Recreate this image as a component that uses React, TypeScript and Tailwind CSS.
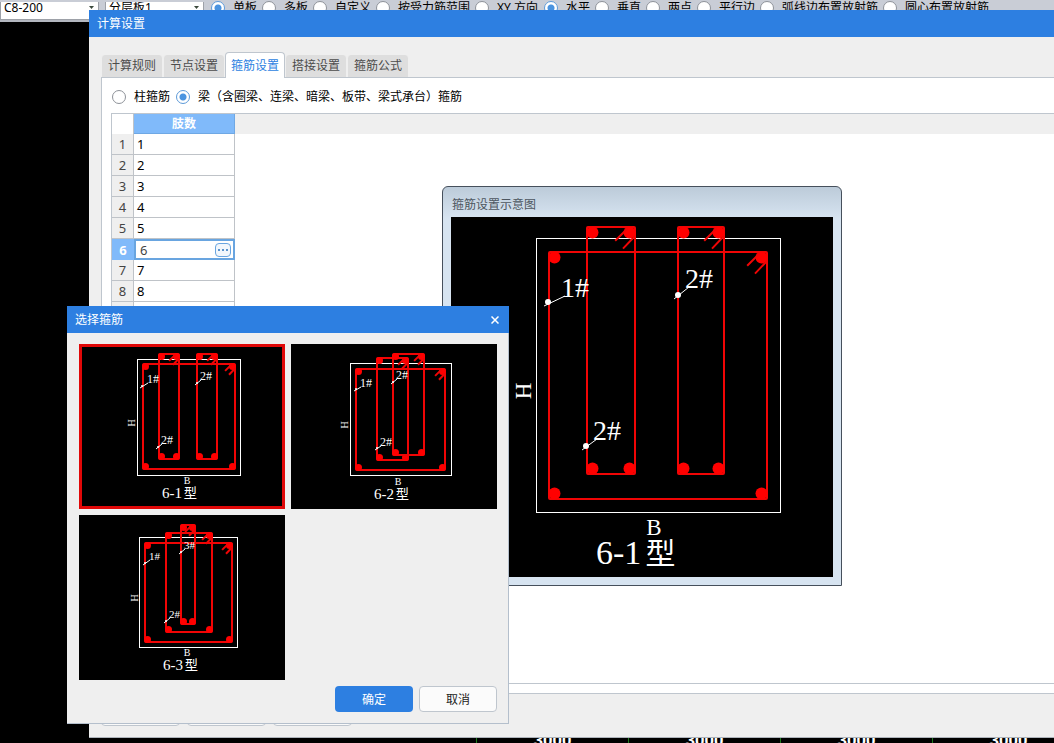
import React from "react";

type Box = [number, number, number, number];
type Mark = { text: string; x: number; y: number; dot: [number, number] };

interface Drawing {
  title: string;
  width: number;
  height: number;
  frame: Box;
  bars: Box[];
  marks: Mark[];
  h: [number, number];
  b: [number, number];
  caption: [number, number];
  corner: number;
  dot: number;
  markSize: number;
  letterSize: number;
  captionSize: number;
}

const small = {
  width: 206,
  height: 165,
  corner: 3,
  dot: 1,
  markSize: 12,
  letterSize: 10,
  captionSize: 15,
};

const typeOne: Drawing = {
  ...small,
  title: "6-1型",
  frame: [58, 15, 161, 131],
  bars: [
    [64, 20, 156, 125],
    [80, 10, 100, 115],
    [118, 10, 138, 115],
  ],
  marks: [
    { text: "1#", x: 68, y: 39, dot: [63, 42] },
    { text: "2#", x: 121, y: 36, dot: [118, 39] },
    { text: "2#", x: 82, y: 100, dot: [79, 103] },
  ],
  h: [53, 79],
  b: [108, 137],
  caption: [83, 154],
};

const typeTwo: Drawing = {
  ...small,
  title: "6-2型",
  frame: [59, 19, 160, 131],
  bars: [
    [65, 25, 154, 126],
    [86, 14, 117, 116],
    [102, 10, 133, 111],
  ],
  marks: [
    { text: "1#", x: 69, y: 43, dot: [65, 45] },
    { text: "2#", x: 105, y: 35, dot: [102, 38] },
    { text: "2#", x: 89, y: 102, dot: [86, 104] },
  ],
  h: [54, 81],
  b: [107, 138],
  caption: [83, 155],
};

const typeThree: Drawing = {
  ...small,
  title: "6-3型",
  markSize: 11,
  frame: [60, 22, 158, 132],
  bars: [
    [66, 28, 153, 127],
    [87, 18, 133, 117],
    [102, 10, 116, 109],
  ],
  marks: [
    { text: "1#", x: 70, y: 45, dot: [66, 48] },
    { text: "3#", x: 105, y: 34, dot: [102, 37] },
    { text: "2#", x: 90, y: 103, dot: [87, 106] },
  ],
  h: [56, 83],
  b: [108, 138],
  caption: [84, 155],
};

const largeOne: Drawing = {
  title: "6-1型",
  width: 382,
  height: 360,
  frame: [85, 21, 329, 295],
  bars: [
    [98, 35, 316, 282],
    [136, 10, 184, 257],
    [227, 10, 273, 257],
  ],
  marks: [
    { text: "1#", x: 110, y: 80, dot: [97, 85] },
    { text: "2#", x: 234, y: 71, dot: [227, 78] },
    { text: "2#", x: 142, y: 223, dot: [135, 229] },
  ],
  h: [72, 174],
  b: [203, 310],
  caption: [145, 347],
  corner: 6,
  dot: 3,
  markSize: 28,
  letterSize: 23,
  captionSize: 34,
};

const serif = '"Liberation Serif", "Noto Sans CJK SC", serif';

function StirrupDrawing({ d }: { d: Drawing }) {
  const c = d.corner;
  const r = c > 4 ? c : c + 0.5;
  const [fx, fy, fx2, fy2] = d.frame;
  return (
    <svg
      viewBox={`0 0 ${d.width} ${d.height}`}
      className="block h-full w-full bg-black"
      role="img"
      aria-label={d.title}
    >
      <rect x={fx + 0.5} y={fy + 0.5} width={fx2 - fx} height={fy2 - fy} fill="none" stroke="#fff" />
      {d.bars.map(([x, y, x2, y2], i) => (
        <g key={i} stroke="#f00505" fill="#ff0000">
          <rect x={x} y={y} width={x2 - x} height={y2 - y} rx={1} fill="none" strokeWidth={2} />
          <g stroke="none">
            <circle cx={x + c - 0.5} cy={y + c - 0.5} r={r} />
            <circle cx={x2 - c + 0.5} cy={y + c - 0.5} r={r} />
            <circle cx={x + c - 0.5} cy={y2 - c + 0.5} r={r} />
            <circle cx={x2 - c + 0.5} cy={y2 - c + 0.5} r={r} />
          </g>
          <path
            strokeWidth={2}
            d={`M${x2 - 3.3 * c} ${y + 2.3 * c}L${x2 - 1.2 * c} ${y + 0.2 * c}M${x2 - 2 * c} ${
              y + 3.6 * c
            }L${x2} ${y + 1.5 * c}`}
          />
        </g>
      ))}
      {d.marks.map((m, i) => {
        const [cx, cy] = m.dot;
        const k = d.dot;
        return (
          <g key={i} fill="#fff">
            <circle cx={cx} cy={cy} r={k} />
            <path
              stroke="#fff"
              d={`M${cx - k - 1} ${cy + k + 1}L${m.x + (k > 1 ? 4 : 1)} ${m.y - (k > 1 ? 1 : 0)}`}
            />
            <text x={m.x} y={m.y} fontFamily={serif} fontSize={d.markSize}>
              {m.text}
            </text>
          </g>
        );
      })}
      <g fill="#fff" fontFamily={serif} fontSize={d.letterSize} textAnchor="middle">
        <text transform={`translate(${d.h[0]} ${d.h[1]}) rotate(-90)`} dy="0.33em">
          H
        </text>
        <text x={d.b[0]} y={d.b[1]} dy="0.33em">
          B
        </text>
      </g>
      <text x={d.caption[0]} y={d.caption[1]} fill="#fff" fontFamily={serif} fontSize={d.captionSize}>
        {d.title.slice(0, 3)}
        <tspan dx="0.14em" fontSize="0.88em">
          {d.title.slice(3)}
        </tspan>
      </text>
    </svg>
  );
}

function Radio({ name, label, checked }: { name: string; label: string; checked?: boolean }) {
  return (
    <label className="flex shrink-0 items-center gap-2 whitespace-nowrap">
      <input
        type="radio"
        name={name}
        defaultChecked={checked}
        className="h-3.5 w-3.5 shrink-0 appearance-none rounded-full border border-[#8e9299] bg-white checked:border-[#5d9ad8] checked:bg-[radial-gradient(circle,#4b94e0_0_3px,#ffffff_4px)]"
      />
      {label}
    </label>
  );
}

function Picker({ label, value }: { label: string; value: string }) {
  return (
    <div className="relative h-[18px] w-[99px] shrink-0">
      <select
        aria-label={label}
        className="h-full w-full appearance-none border border-t-0 border-[#9da1a8] bg-white pb-1 pl-[3px] text-xs leading-3"
      >
        <option>{value}</option>
      </select>
      <svg viewBox="0 0 5 3" className="pointer-events-none absolute right-[5px] top-1.5 h-[3px] w-[5px]">
        <path d="M0 0h5L2.5 3z" fill="#3c4a3c" />
      </svg>
    </div>
  );
}

const placements = ["单板", "多板", "自定义", "按受力筋范围", "XY 方向"];
const directions = ["水平", "垂直", "两点", "平行边", "弧线边布置放射筋", "圆心布置放射筋"];
const tabs = ["计算规则", "节点设置", "箍筋设置", "搭接设置", "箍筋公式"];
const legs = [1, 2, 3, 4, 5, 6, 7, 8];

function LegTable() {
  return (
    <table className="w-[123px] table-fixed border-separate border-spacing-0 text-[13px] leading-5">
      <colgroup>
        <col className="w-[22px]" />
        <col />
      </colgroup>
      <thead>
        <tr>
          <th className="h-5 border-r border-[#bfc3c8] bg-white p-0" />
          <th className="h-5 border-b border-r border-[#6fa8e4] bg-[#80bafa] p-0 text-xs leading-[18px] text-white">肢数</th>
        </tr>
      </thead>
      <tbody>
        {legs.map((n) =>
          n === 6 ? (
            <tr key={n}>
              <th className="h-[21px] bg-[#80bafa] p-0 font-bold text-white">{n}</th>
              <td className="h-[21px] p-0">
                <div className="flex h-[21px] items-center border-2 border-[#69a5e0] bg-white pl-1 pr-0.5 text-[#444]">
                  <input aria-label="肢数" defaultValue="6" className="w-0 min-w-0 grow outline-none" />
                  <button
                    aria-label="选择箍筋"
                    className="flex h-[14px] w-4 items-center justify-center gap-0.5 rounded-sm border border-[#69a5e0] bg-[#f2f7fc]"
                  >
                    <span className="h-0.5 w-0.5 bg-[#5b93cc]" />
                    <span className="h-0.5 w-0.5 bg-[#5b93cc]" />
                    <span className="h-0.5 w-0.5 bg-[#5b93cc]" />
                  </button>
                </div>
              </td>
            </tr>
          ) : (
            <tr key={n}>
              <th className="h-[21px] border-b border-r border-[#bfc3c8] bg-[#efefef] p-0 font-normal text-[#444]">{n}</th>
              <td className="h-[21px] border-b border-r border-[#bfc3c8] bg-white p-0 pl-[3px]">{n}</td>
            </tr>
          )
        )}
        <tr>
          <th className="h-[21px] border-b border-r border-[#bfc3c8] bg-[#efefef] p-0" />
          <td className="h-[21px] border-b border-r border-[#bfc3c8] bg-white p-0" />
        </tr>
      </tbody>
    </table>
  );
}

function SettingsDialog() {
  return (
    <section className="absolute bottom-[5px] left-[89px] right-0 top-2.5 flex flex-col border-b border-[#aeb4bb] bg-[#efefef]">
      <h1 className="h-[27px] shrink-0 bg-[#2d7fe1] pl-2 leading-[27px] text-white">计算设置</h1>
      <div role="tablist" className="z-10 ml-3 mt-[15px] flex h-[26px] shrink-0 items-end">
        {tabs.map((t) =>
          t === "箍筋设置" ? (
            <button
              key={t}
              role="tab"
              aria-selected
              className="h-[26px] rounded-t border border-b-0 border-[#bfc6ce] bg-white px-[5px] text-[#2d7fe1]"
            >
              {t}
            </button>
          ) : (
            <button
              key={t}
              role="tab"
              className="mb-px h-[22px] rounded-t border-x border-[#efefef] bg-[#dedede] px-1.5 text-[#4c4c4c]"
            >
              {t}
            </button>
          )
        )}
      </div>
      <div className="-mt-px ml-3 flex grow flex-col border-b border-l border-t border-[#bfc6ce] bg-white pb-[9px] pl-[9px] pt-[11px]">
        <div className="flex h-4 gap-1.5 pl-px">
          <Radio name="kind" label="柱箍筋" />
          <Radio name="kind" label="梁（含圈梁、连梁、暗梁、板带、梁式承台）箍筋" checked />
        </div>
        <div className="mt-2 grow border-b border-l border-t border-[#bfc6ce] bg-[linear-gradient(#efefef_20px,#ffffff_20px)]">
          <LegTable />
        </div>
      </div>
      <div className="flex h-[43px] shrink-0 gap-[7px] pl-3 pt-1.5">
        {["导入规则", "导出规则", "恢复默认"].map((t) => (
          <button
            key={t}
            aria-label={t}
            className="h-[26px] w-[79px] rounded-sm border border-[#bfc6ce] bg-[#fafafa]"
          />
        ))}
      </div>
    </section>
  );
}

function SchematicWindow() {
  return (
    <section className="absolute left-[442px] top-[186px] w-[400px] rounded-t-md border border-[#46505c] bg-[linear-gradient(#bccbd9,#d7e4f1_32px)] px-2 pb-2">
      <h2 className="h-[30px] pl-px pt-2 leading-5 text-[#4d5660]">箍筋设置示意图</h2>
      <div className="h-[360px]">
        <StirrupDrawing d={largeOne} />
      </div>
    </section>
  );
}

function ChooseDialog() {
  return (
    <section className="absolute left-[67px] top-[306px] w-[442px] border-b border-r border-[#b4bfcc] bg-[#efefef]">
      <header className="-mr-px flex h-[27px] items-center justify-between bg-[#2d7fe1] pl-2 pr-2.5 text-white">
        <h2>选择箍筋</h2>
        <button aria-label="关闭">
          <svg viewBox="0 0 8 8" className="h-2 w-2">
            <path d="M0.5 0.5l7 7M7.5 0.5l-7 7" stroke="#fff" strokeWidth="1.5" />
          </svg>
        </button>
      </header>
      <div className="flex flex-wrap gap-1.5 pl-3 pt-[11px]">
        <button className="relative h-[165px] w-[206px]">
          <StirrupDrawing d={typeOne} />
          <span className="absolute inset-0 border-[3px] border-[#e00808]" />
        </button>
        <button className="h-[165px] w-[206px]">
          <StirrupDrawing d={typeTwo} />
        </button>
        <button className="h-[165px] w-[206px]">
          <StirrupDrawing d={typeThree} />
        </button>
      </div>
      <footer className="flex justify-end gap-1.5 pb-[11px] pr-[11px] pt-1.5">
        <button className="h-[26px] w-[78px] rounded-sm bg-[#2d7fe1] pt-0.5 text-white">确定</button>
        <button className="h-[26px] w-[78px] rounded-sm border border-[#bfc6ce] bg-[#fbfbfb] pt-0.5 text-[#222]">取消</button>
      </footer>
    </section>
  );
}

export default function App() {
  return (
    <main className="relative flex h-screen flex-col overflow-hidden bg-black font-['Noto_Sans','Noto_Sans_CJK_SC',sans-serif] text-xs text-black">
      <div className="flex h-[22px] shrink-0 items-start gap-1.5 overflow-hidden border-b-2 border-[#b3b7bf] bg-[#c9cdd6]">
        <Picker label="钢筋" value="C8-200" />
        <Picker label="分层" value="分层板1" />
        <div className="ml-px flex h-[15px] items-center gap-[5px]">
          {placements.map((p, i) => (
            <Radio key={p} name="placement" label={p} checked={i === 0} />
          ))}
          <div className="ml-px flex items-center gap-[5px]">
            {directions.map((p, i) => (
              <Radio key={p} name="direction" label={p} checked={i === 0} />
            ))}
          </div>
        </div>
      </div>
      <div className="grow" />
      <div className="ml-[476px] flex h-[11px] shrink-0 overflow-hidden font-['Liberation_Sans',sans-serif] text-[17px] font-bold leading-[18px] text-white">
        {[0, 1, 2, 3].map((n) => (
          <span key={n} className="w-[152px] shrink-0 border-l border-[#1d7a1d] text-center">
            3000
          </span>
        ))}
      </div>
      <SettingsDialog />
      <SchematicWindow />
      <ChooseDialog />
    </main>
  );
}
